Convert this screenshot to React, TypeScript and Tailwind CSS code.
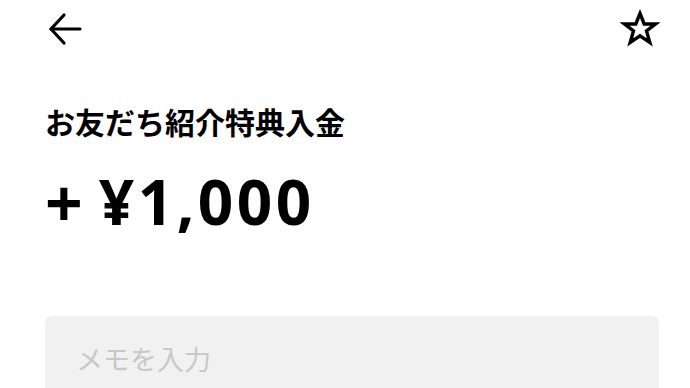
import { useState } from 'react';

const jp = { fontFamily: '"Noto Sans CJK JP", "Noto Sans", sans-serif' };

function BackArrow() {
  return (
    <svg width="34" height="34" viewBox="0 0 34 34" fill="none" stroke="#000" strokeWidth="3.2" strokeLinecap="round" strokeLinejoin="round">
      <path d="M3 17H32" />
      <path d="M16 3L3 17L16 31" />
    </svg>
  );
}

function StarOutline() {
  return (
    <svg width="40" height="40" viewBox="0 0 40 40" fill="none" stroke="#000" strokeWidth="3.4" strokeLinejoin="miter">
      <path d="M20 4.5L24.2 15H35.5L26.5 22L29.8 33.5L20 26.8L10.2 33.5L13.5 22L4.5 15H15.8Z" />
    </svg>
  );
}

export default function App() {
  const [memo, setMemo] = useState('');

  return (
    <main className="h-screen bg-white text-black overflow-hidden" style={jp}>
      <div className="flex items-center justify-between pl-[48px] pr-[30px] pt-[11px] h-[46px]">
        <button className="flex items-center"><BackArrow /></button>
        <button className="flex items-center"><StarOutline /></button>
      </div>
      <div className="pl-[45px] pr-[31px]">
        <h1 className="mt-[60px] text-[30px] leading-[30px] font-bold">お友だち紹介特典入金</h1>
        <p className="mt-[34px] flex text-[62px] leading-[62px] font-bold" style={{ fontFamily: '"Noto Sans", sans-serif' }}>
          <span className="text-[66px]">+</span>
          <span className="ml-[16px] tracking-[3.5px]">¥1,000</span>
        </p>
        <div className="mt-[84px] h-[90px] rounded-[8px] bg-[#f1f1f1] pl-[31px] pt-[25px]">
          <input
            value={memo}
            onChange={e => setMemo(e.target.value)}
            placeholder="メモを入力"
            className="w-full bg-transparent outline-none text-[27px] leading-[36px] placeholder:text-[#c8c8c8]"
            style={jp}
          />
        </div>
      </div>
    </main>
  );
}
